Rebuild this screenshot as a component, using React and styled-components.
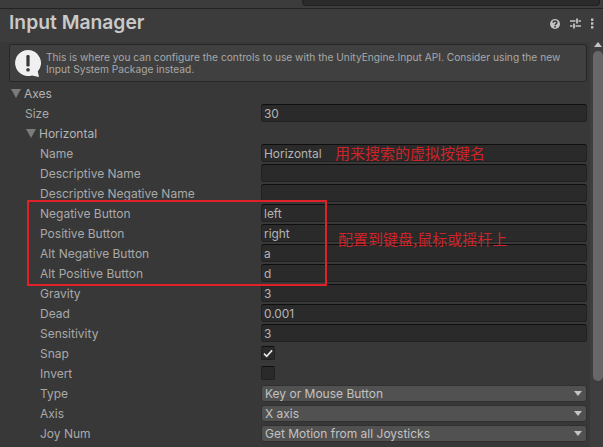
import React from 'react';
import styled, { createGlobalStyle } from 'styled-components';

const GlobalStyle = createGlobalStyle`
  html, body { margin: 0; padding: 0; background: #383838; }
  * { box-sizing: border-box; }
`;

const axisRows = [
  { label: 'Name', value: 'Horizontal' },
  { label: 'Descriptive Name', value: '' },
  { label: 'Descriptive Negative Name', value: '' },
  { label: 'Negative Button', value: 'left' },
  { label: 'Positive Button', value: 'right' },
  { label: 'Alt Negative Button', value: 'a' },
  { label: 'Alt Positive Button', value: 'd' },
  { label: 'Gravity', value: '3' },
  { label: 'Dead', value: '0.001' },
  { label: 'Sensitivity', value: '3' },
];

export default function App() {
  return (
    <Page>
      <GlobalStyle />
      <TopStrip>
        <SearchEnd />
      </TopStrip>
      <Header>
        <Title>Input Manager</Title>
        <HeaderIcons>
          <HelpIcon />
          <SlidersIcon />
          <DotsIcon />
        </HeaderIcons>
      </Header>
      <Body>
        <Content>
          <HelpBox>
            <InfoIcon />
            <HelpText>
              This is where you can configure the controls to use with the UnityEngine.Input API. Consider using the new Input System Package instead.
            </HelpText>
          </HelpBox>
          <Rows>
            <Row>
              <Foldout $indent={2}><Arrow />Axes</Foldout>
            </Row>
            <Row>
              <Label $indent={16}>Size</Label>
              <Field>30</Field>
            </Row>
            <Row>
              <Foldout $indent={17}><Arrow />Horizontal</Foldout>
            </Row>
            {axisRows.map((r) => (
              <Row key={r.label}>
                <Label $indent={31}>{r.label}</Label>
                <Field>{r.value}</Field>
              </Row>
            ))}
            <Row>
              <Label $indent={31}>Snap</Label>
              <Check>
                <svg width="10" height="9" viewBox="0 0 10 9">
                  <path d="M1 4.6 L3.7 7.3 L9 1.4" fill="none" stroke="#e8e8e8" strokeWidth="1.6" />
                </svg>
              </Check>
            </Row>
            <Row>
              <Label $indent={31}>Invert</Label>
              <Check />
            </Row>
            <Row>
              <Label $indent={31}>Type</Label>
              <Select>Key or Mouse Button<Caret /></Select>
            </Row>
            <Row>
              <Label $indent={31}>Axis</Label>
              <Select>X axis<Caret /></Select>
            </Row>
            <Row>
              <Label $indent={31}>Joy Num</Label>
              <Select>Get Motion from all Joysticks<Caret /></Select>
            </Row>
          </Rows>
        </Content>
        <Scrollbar>
          <ScrollUp />
          <ScrollThumb />
        </Scrollbar>
      </Body>
      <RedBox />
      <Note $x={335} $y={144}>用来搜索的虚拟按键名</Note>
      <Note $x={338} $y={230}>配置到键盘,鼠标或摇杆上</Note>
    </Page>
  );
}

function HelpIcon() {
  return (
    <svg width="12" height="12" viewBox="0 0 12 12">
      <circle cx="6" cy="6" r="5" fill="#c4c4c4" />
      <path d="M4.2 4.7 C4.2 2.5 7.9 2.6 7.9 4.6 C7.9 5.9 6.1 5.8 6.1 7.2" fill="none" stroke="#383838" strokeWidth="1.5" />
      <rect x="5.3" y="8" width="1.6" height="1.6" fill="#383838" />
    </svg>
  );
}

function SlidersIcon() {
  return (
    <svg width="11" height="11" viewBox="0 0 11 11">
      <path d="M0 3 H5.5 M8.5 3 H11 M0 8 H2.5 M5.5 8 H11" stroke="#c4c4c4" strokeWidth="1.4" />
      <path d="M7 .5 V5.5 M4 5.5 V10.5" stroke="#c4c4c4" strokeWidth="1.8" />
    </svg>
  );
}

function DotsIcon() {
  return (
    <svg width="4" height="11" viewBox="0 0 4 11">
      <rect x="1" y="0.5" width="2.4" height="2.4" fill="#c4c4c4" />
      <rect x="1" y="4.3" width="2.4" height="2.4" fill="#c4c4c4" />
      <rect x="1" y="8.1" width="2.4" height="2.4" fill="#c4c4c4" />
    </svg>
  );
}

function InfoIcon() {
  return (
    <svg width="26" height="28" viewBox="0 0 26 28" style={{ flex: 'none' }}>
      <path d="M13 1 A13 13 0 1 0 17 26.4 L24 28 L22.8 22.4 A13 13 0 0 0 13 1 Z" fill="#f0f0f0" />
      <rect x="11.4" y="6" width="3.2" height="11.5" rx="1.2" fill="#383838" />
      <rect x="11.4" y="19.3" width="3.2" height="3.2" rx="1" fill="#383838" />
    </svg>
  );
}

const Page = styled.div`
  position: relative;
  width: 603px;
  height: 447px;
  overflow: hidden;
  background: #383838;
  font-family: Inter, "Noto Sans", sans-serif;
  font-size: 12px;
  color: #bdbdbd;
`;

const TopStrip = styled.div`
  height: 9px;
  background: #3c3c3c;
  border-bottom: 1px solid #232323;
  display: flex;
  justify-content: flex-end;
`;

const SearchEnd = styled.div`
  width: 298px;
  height: 6px;
  margin-right: 3px;
  background: #2a2a2a;
  border: 1px solid #212121;
  border-top: none;
  border-radius: 0 0 4px 4px;
`;

const Header = styled.div`
  height: 33px;
  padding: 0 9px 0 9px;
  display: flex;
  align-items: center;
  justify-content: space-between;
  background: #3c3c3c;
`;

const Title = styled.div`
  font-size: 19.3px;
  font-weight: 600;
  color: #c9c9c9;
  position: relative;
  top: -4px;
`;

const HeaderIcons = styled.div`
  display: flex;
  align-items: center;
  gap: 9px;
  position: relative;
  top: -2px;
`;

const Body = styled.div`
  display: flex;
  height: 405px;
`;

const Content = styled.div`
  flex: 1;
  padding: 2px 3px 0 9px;
`;

const HelpBox = styled.div`
  height: 38px;
  display: flex;
  align-items: center;
  gap: 5px;
  padding: 0 5px;
  background: #404040;
  border: 1px solid #272727;
  border-radius: 3px;
`;

const HelpText = styled.div`
  font-size: 10.2px;
  line-height: 12px;
  color: #a8a8a8;
`;

const Rows = styled.div`
  display: flex;
  flex-direction: column;
  padding-top: 1px;
`;

const Row = styled.div`
  height: 20px;
  display: flex;
  align-items: center;
`;

const Label = styled.div`
  width: 252px;
  padding-left: ${(p) => p.$indent}px;
  flex: none;
  white-space: nowrap;
  color: #a9a9a9;
`;

const Foldout = styled.div`
  padding-left: ${(p) => p.$indent}px;
  display: flex;
  align-items: center;
  gap: 3px;
  color: #b4b4b4;
`;

const Arrow = styled.span`
  width: 0;
  height: 0;
  border-left: 5px solid transparent;
  border-right: 5px solid transparent;
  border-top: 9px solid #7b7b7b;
`;

const Field = styled.div`
  flex: 1;
  height: 18px;
  line-height: 16px;
  padding: 1px 2px 0;
  font-size: 11.9px;
  background: #2a2a2a;
  border: 1px solid #212121;
  border-top-color: #0e0e0e;
  border-radius: 3px;
  color: #b4b4b4;
`;

const Check = styled.div`
  width: 14px;
  height: 14px;
  display: flex;
  align-items: center;
  justify-content: center;
  background: #2a2a2a;
  border: 1px solid #212121;
  border-top-color: #0e0e0e;
  border-radius: 2px;
`;

const Select = styled.div`
  flex: 1;
  height: 17px;
  padding: 0 0 0 3px;
  display: flex;
  align-items: center;
  justify-content: space-between;
  background: #515151;
  border: 1px solid #303030;
  border-radius: 3px;
  color: #c2c2c2;
`;

const Caret = styled.span`
  width: 0;
  height: 0;
  margin-right: 4px;
  border-left: 4px solid transparent;
  border-right: 4px solid transparent;
  border-top: 5px solid #c4c4c4;
`;

const Scrollbar = styled.div`
  width: 13px;
  flex: none;
  padding: 0 0 0 3px;
  display: flex;
  flex-direction: column;
  align-items: center;
  background: #3e3e3e;
`;

const ScrollUp = styled.span`
  width: 0;
  height: 0;
  margin: 0 0 4px 0;
  border-left: 4px solid transparent;
  border-right: 4px solid transparent;
  border-bottom: 5px solid #c4c4c4;
`;

const ScrollThumb = styled.div`
  width: 10px;
  height: 330px;
  background: #676767;
  border-radius: 5px;
`;

const RedBox = styled.div`
  position: absolute;
  left: 27px;
  top: 200px;
  width: 300px;
  height: 86px;
  border: 2px solid #e02128;
  pointer-events: none;
`;

const Note = styled.div`
  position: absolute;
  left: ${(p) => p.$x}px;
  top: ${(p) => p.$y}px;
  font-family: "Noto Sans CJK SC", sans-serif;
  font-size: 15px;
  line-height: 18px;
  color: #cf2329;
  white-space: nowrap;
`;
